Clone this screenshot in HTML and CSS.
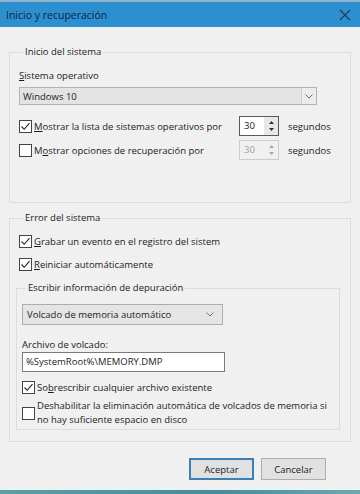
FILE: index.html
```html
<!DOCTYPE html>
<html lang="es">
<head>
    <meta charset="UTF-8">
    <meta name="viewport" content="width=device-width, initial-scale=1.0">
    <title>Inicio y recuperación</title>
    <link rel="stylesheet" href="styles.css">
</head>
<body>
    <div class="window">
        <div class="titlebar">
            <span class="title">Inicio y recuperación</span>
            <svg class="close" width="12" height="12" viewBox="0 0 12 12">
                <path d="M1 1 L11 11 M11 1 L1 11" stroke="#1d3b55" stroke-width="1.1" fill="none"/>
            </svg>
        </div>

        <div class="content">
            <fieldset class="group startup">
                <legend>Inicio del sistema</legend>
                <div class="field-label"><u>S</u>istema operativo</div>
                <div class="combo os-combo">
                    <span class="combo-text">Windows 10</span>
                    <span class="combo-btn">
                        <svg width="8" height="5" viewBox="0 0 8 5"><path d="M0.5 0.5 L4 4 L7.5 0.5" stroke="#707070" fill="none"/></svg>
                    </span>
                </div>
                <div class="row first">
                    <label class="check">
                        <span class="box"><svg width="11" height="11" viewBox="0 0 11 11"><path d="M1.5 5.5 L4.2 8.3 L9.5 2.2" stroke="#222" stroke-width="1.1" fill="none"/></svg></span>
                        <span><u>M</u>ostrar la lista de sistemas operativos por</span>
                    </label>
                    <div class="spin">
                        <span class="spin-value">30</span>
                        <span class="spin-btns">
                            <svg width="7" height="14" viewBox="0 0 7 14"><path d="M3.5 2 L6 5 L1 5 Z M3.5 12 L6 9 L1 9 Z" fill="#333"/></svg>
                        </span>
                    </div>
                    <span class="unit">segundos</span>
                </div>
                <div class="row second">
                    <label class="check">
                        <span class="box"></span>
                        <span>M<u>o</u>strar opciones de recuperación por</span>
                    </label>
                    <div class="spin disabled">
                        <span class="spin-value">30</span>
                        <span class="spin-btns">
                            <svg width="7" height="14" viewBox="0 0 7 14"><path d="M3.5 2 L6 5 L1 5 Z M3.5 12 L6 9 L1 9 Z" fill="#aaa"/></svg>
                        </span>
                    </div>
                    <span class="unit">segundos</span>
                </div>
            </fieldset>

            <fieldset class="group failure">
                <legend>Error del sistema</legend>
                <label class="check line grabar">
                    <span class="box"><svg width="11" height="11" viewBox="0 0 11 11"><path d="M1.5 5.5 L4.2 8.3 L9.5 2.2" stroke="#222" stroke-width="1.1" fill="none"/></svg></span>
                    <span><u>G</u>rabar un evento en el registro del sistem</span>
                </label>
                <label class="check line reiniciar">
                    <span class="box"><svg width="11" height="11" viewBox="0 0 11 11"><path d="M1.5 5.5 L4.2 8.3 L9.5 2.2" stroke="#222" stroke-width="1.1" fill="none"/></svg></span>
                    <span><u>R</u>einiciar automáticamente</span>
                </label>

                <fieldset class="group debug">
                    <legend>Escribir información de depuración</legend>
                    <div class="combo dump-combo">
                        <span class="combo-text">Volcado de memoria automático</span>
                        <svg width="8" height="5" viewBox="0 0 8 5"><path d="M0.5 0.5 L4 4 L7.5 0.5" stroke="#707070" fill="none"/></svg>
                    </div>
                    <div class="field-label dump-label">Archivo de volcado:</div>
                    <div class="textbox">%SystemRoot%\MEMORY.DMP</div>
                    <label class="check line overwrite">
                        <span class="box"><svg width="11" height="11" viewBox="0 0 11 11"><path d="M1.5 5.5 L4.2 8.3 L9.5 2.2" stroke="#222" stroke-width="1.1" fill="none"/></svg></span>
                        <span>So<u>b</u>rescribir cualquier archivo existente</span>
                    </label>
                    <label class="check multi">
                        <span class="box"></span>
                        <span>Deshabilitar la eliminación automática de volcados de memoria si no hay suficiente espacio en disco</span>
                    </label>
                </fieldset>
            </fieldset>

            <div class="buttons">
                <button class="btn default">Aceptar</button>
                <button class="btn">Cancelar</button>
            </div>
        </div>
        <div class="taskbar"></div>
    </div>
</body>
</html>
```

FILE: styles.css
```css
body {
    margin: 0;
    padding: 0;
    background: #f0f0f0;
    font-family: "Open Sans", "Noto Sans", sans-serif;
    font-size: 9.5px;
    color: #1b1b1b;
}
.window {
    width: 360px;
    height: 494px;
    background: #f0f0f0;
    display: flex;
    flex-direction: column;
    overflow: hidden;
}
.titlebar {
    height: 27px;
    background: #2b8fd0;
    border-top: 2px solid #8fb3cc;
    box-sizing: border-box;
    display: flex;
    align-items: center;
    justify-content: space-between;
    padding: 0 9px 0 6px;
}
.title {
    font-size: 10.5px;
    color: #10263a;
}
.content {
    flex: 1;
    padding: 0 9px;
}
.group {
    margin: 0;
    padding: 0 0 0 9px;
    border: 1px solid #dcdcdc;
    width: 342px;
    box-sizing: border-box;
}
.group legend {
    padding: 0 2px;
    margin-left: 4px;
    line-height: 12px;
}
.startup {
    margin-top: 19px;
    height: 157px;
}
.field-label {
    line-height: 12px;
    margin-top: 12px;
}
.combo {
    display: flex;
    align-items: center;
    background: #e5e5e5;
    border: 1px solid #adadad;
    box-sizing: border-box;
}
.os-combo {
    margin-top: 5px;
    width: 298px;
    height: 18px;
    padding-left: 3px;
    background: #e3e3e3;
    border-color: #b4b4b4;
}
.os-combo .combo-text {
    flex: 1;
}
.combo-btn {
    width: 14px;
    height: 16px;
    border-left: 1px solid #cfcfcf;
    background: #ececec;
    display: flex;
    align-items: center;
    justify-content: center;
}
.row {
    display: flex;
    align-items: center;
    height: 20px;
}
.row.first {
    margin-top: 11px;
}
.row.second {
    margin-top: 4px;
}
.row .check {
    width: 220px;
}
.check {
    display: flex;
    align-items: center;
    gap: 2px;
}
.box {
    width: 11px;
    height: 11px;
    border: 1px solid #444;
    background: #fff;
    display: flex;
    align-items: center;
    justify-content: center;
    flex: none;
}
.spin {
    display: flex;
    width: 40px;
    height: 20px;
    box-sizing: border-box;
    border: 1px solid #5a5a5a;
    background: #fff;
}
.spin-value {
    flex: 1;
    padding-left: 4px;
    line-height: 18px;
}
.spin-btns {
    width: 14px;
    background: #e8e8e8;
    display: flex;
    align-items: center;
    justify-content: center;
}
.spin.disabled {
    border-color: #cccccc;
    background: #f0f0f0;
    color: #a0a0a0;
}
.spin.disabled .spin-btns {
    background: #f0f0f0;
}
.unit {
    margin-left: 9px;
}
.failure {
    margin-top: 9px;
    height: 230px;
}
.line {
    height: 16px;
}
.grabar {
    margin-top: 9px;
}
.reiniciar {
    margin-top: 7px;
}
.debug {
    margin: 10px 0 0 -3px;
    width: 324px;
    height: 148px;
    padding-left: 5px;
}
.dump-combo {
    margin-top: 10px;
    width: 201px;
    height: 21px;
    padding: 0 8px 0 4px;
}
.dump-combo .combo-text {
    flex: 1;
}
.dump-label {
    margin-top: 14px;
}
.textbox {
    margin-top: 1px;
    width: 203px;
    height: 20px;
    box-sizing: border-box;
    border: 1px solid #7a7a7a;
    background: #fff;
    padding-left: 3px;
    line-height: 18px;
}
.overwrite {
    margin-top: 7px;
}
.multi {
    margin-top: 4px;
    line-height: 14px;
    width: 314px;
}
.buttons {
    display: flex;
    justify-content: flex-end;
    gap: 7px;
    margin-top: 16px;
    padding-right: 25px;
}
.btn {
    width: 65px;
    height: 22px;
    font-family: inherit;
    font-size: 9.5px;
    color: #1b1b1b;
    background: #e1e1e1;
    border: 1px solid #adadad;
    padding: 0;
}
.btn.default {
    border: 2px solid #3a7fb8;
}
.taskbar {
    height: 4px;
    background: linear-gradient(90deg, #5aa0a8, #3f8fa0 60%, #6aaab4);
}
```
